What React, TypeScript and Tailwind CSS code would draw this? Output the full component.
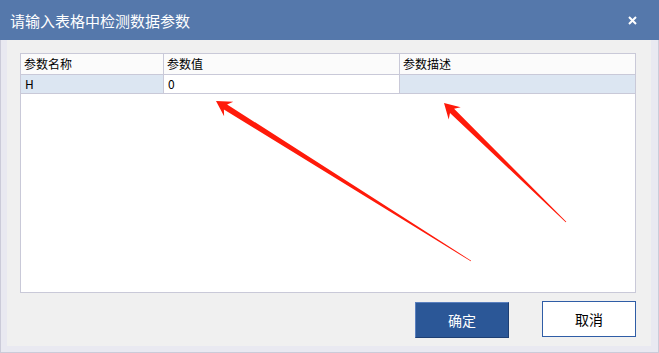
import React from 'react';

type Pt = [number, number];

// Tapered red callout arrow, tip first, tail last.
function arrowPoints(tip: Pt, tail: Pt, len = 15, half = 8.6, shaft = 3) {
  const dx = tail[0] - tip[0];
  const dy = tail[1] - tip[1];
  const l = Math.hypot(dx, dy);
  const d: Pt = [dx / l, dy / l];
  const n: Pt = [-d[1], d[0]];
  const at = (s: number, t: number): Pt => [tip[0] + d[0] * s + n[0] * t, tip[1] + d[1] * s + n[1] * t];
  const pts: Pt[] = [
    tip,
    at(len, half),
    at(len * 0.75, shaft),
    [tail[0] + n[0] * 0.4, tail[1] + n[1] * 0.4],
    [tail[0] - n[0] * 0.4, tail[1] - n[1] * 0.4],
    at(len * 0.75, -shaft),
    at(len, -half),
  ];
  return pts.map((p) => `${p[0].toFixed(1)},${p[1].toFixed(1)}`).join(' ');
}

const COLS = [
  { title: '参数名称', value: 'H', cls: 'w-[143px] bg-[#dce6f2]' },
  { title: '参数值', value: '0', cls: 'w-[236px] bg-white' },
  { title: '参数描述', value: '', cls: 'flex-1 bg-[#dce6f2]' },
];

export default function App() {
  return (
    <div className="relative flex h-[353px] w-[659px] flex-col overflow-hidden font-['Noto_Sans_CJK_SC',sans-serif] text-black">
      <div className="flex h-[40px] shrink-0 items-center justify-between bg-[#5578ab] pl-[10px] pr-[22px]">
        <span className="text-[15px] leading-none text-white">请输入表格中检测数据参数</span>
        <svg width="9" height="9" viewBox="0 0 9 9" className="mt-[1px]">
          <path d="M1 1L8 8M8 1L1 8" stroke="white" strokeWidth="2" />
        </svg>
      </div>

      <div className="flex flex-1 border-x border-b border-[#cbcbd9] bg-[#e9e9f1] pb-[6px] pl-[6px] pr-[7px]">
        <div className="flex flex-1 flex-col bg-[#f0f0f0] pl-[13px] pr-[15px] pt-[13px]">
          <div className="flex h-[240px] flex-col border border-[#c9c9d8] bg-white">
            <div className="flex h-[21px] border-b border-[#c9c9d8] bg-[#fbfbfb]">
              {COLS.map((c, i) => (
                <div
                  key={c.title}
                  className={`flex items-center px-[3px] text-[12px] leading-none ${i === 2 ? 'flex-1' : i === 0 ? 'w-[143px] border-r border-[#c9c9d8]' : 'w-[236px] border-r border-[#c9c9d8]'}`}
                >
                  {c.title}
                </div>
              ))}
            </div>
            <div className="flex h-[19px] border-b border-[#c9c9d8]">
              {COLS.map((c, i) => (
                <div
                  key={c.title}
                  className={`flex items-center px-[4px] text-[12px] leading-none ${c.cls} ${i < 2 ? 'border-r border-[#c9c9d8]' : ''}`}
                >
                  {c.value}
                </div>
              ))}
            </div>
          </div>

          <div className="mt-[8px] flex justify-end gap-[33px]">
            <button
              type="button"
              className="mt-[1px] h-[36px] w-[94px] border border-b-[#1e3f73] border-l-[#5a80bf] border-r-[#1e3f73] border-t-[#5a80bf] bg-[#2b5797] text-[14px] text-white"
            >
              确定
            </button>
            <button
              type="button"
              className="h-[36px] w-[94px] border border-[#2f5da6] bg-white text-[14px] text-black"
            >
              取消
            </button>
          </div>
        </div>
      </div>

      <svg className="pointer-events-none absolute left-0 top-0" width="659" height="353">
        <polygon points={arrowPoints([216, 101], [471, 261])} fill="#ff1a0a" />
        <polygon points={arrowPoints([444, 103], [566, 222])} fill="#ff1a0a" />
      </svg>
    </div>
  );
}
